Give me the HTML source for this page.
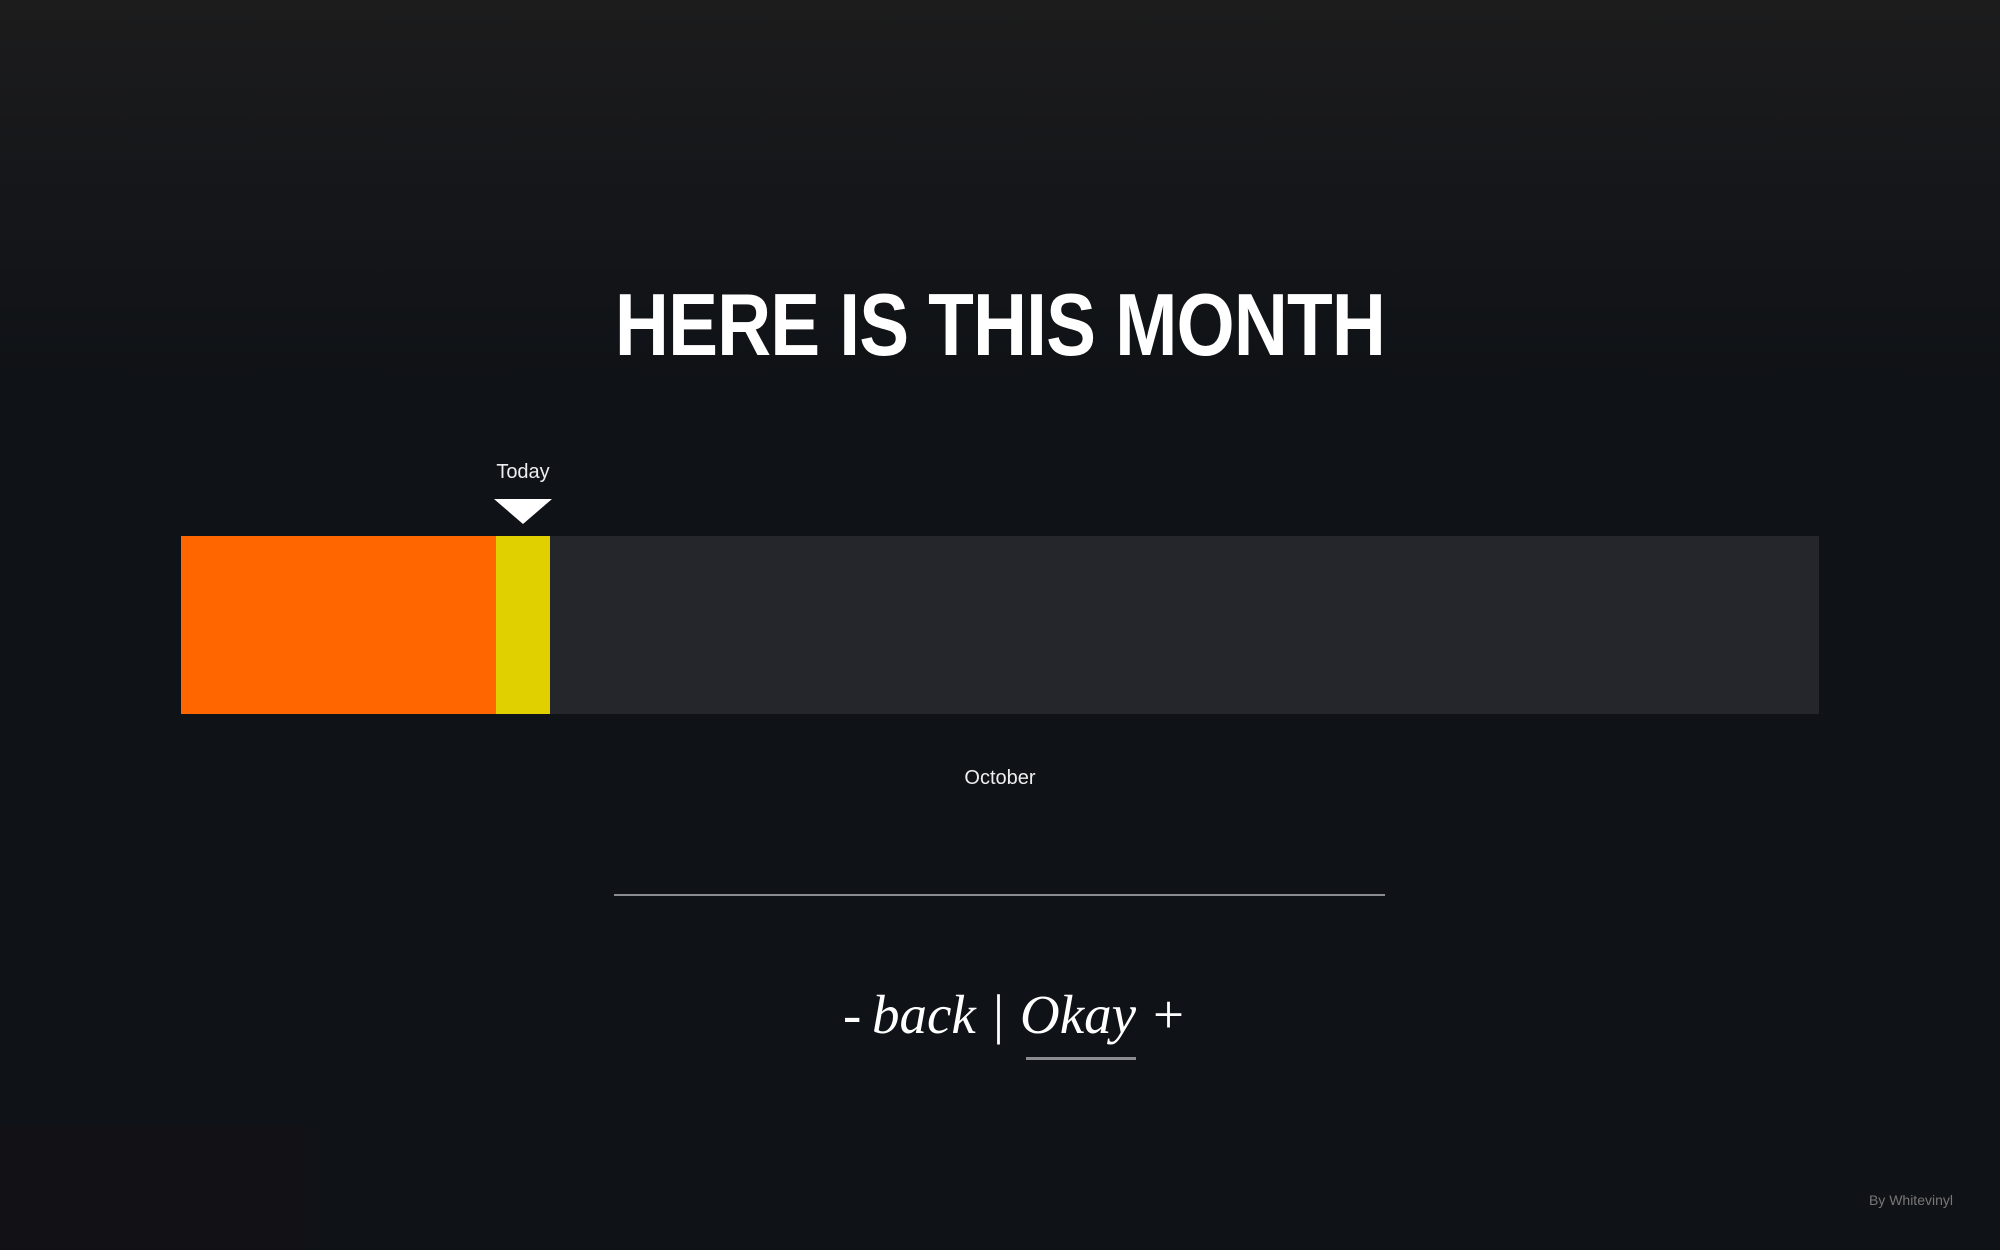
<!DOCTYPE html>
<html><head><meta charset="utf-8"><style>
html,body{margin:0;padding:0;}
body{width:2000px;height:1250px;position:relative;overflow:hidden;background:#0f1216;font-family:"Liberation Sans",sans-serif;color:#fff;}
.top{position:absolute;left:0;top:0;width:2000px;height:380px;background:linear-gradient(#1c1c1d 0%,#16171a 45%,#0f1216 100%);}
.bl{position:absolute;left:0;top:1125px;width:305px;height:125px;background:#121116;}
.title{position:absolute;left:0;width:2000px;top:272px;text-align:center;font-weight:bold;font-size:88px;line-height:106px;letter-spacing:-1px;transform:scaleX(0.85);transform-origin:1000px 0;}
.today{position:absolute;left:463px;width:120px;top:461px;text-align:center;font-size:20px;color:#eee;}
.tri{position:absolute;left:494px;top:499px;width:0;height:0;border-left:29px solid transparent;border-right:29px solid transparent;border-top:25px solid #fff;}
.bar{position:absolute;left:181px;top:536px;width:1638px;height:178px;background:#24262b;}
.o{position:absolute;left:181px;top:536px;width:315px;height:178px;background:#ff6600;}
.y{position:absolute;left:496px;top:536px;width:54px;height:178px;background:#e0d000;}
.oct{position:absolute;left:0;width:2000px;top:767px;text-align:center;font-size:20px;color:#eee;}
.line{position:absolute;left:614px;top:894px;width:771px;height:2px;background:#8a8c90;}
.n{position:absolute;top:980px;white-space:nowrap;font-family:"Liberation Serif",serif;font-style:italic;font-size:55px;line-height:70px;color:#fff;}
.nn{font-style:normal;}
.ul{position:absolute;left:1026px;top:1057px;width:110px;height:3px;background:#8a8c90;}
.by{position:absolute;right:47px;top:1192px;font-size:14px;color:#777;}
</style></head><body>
<div class="top"></div><div class="bl"></div>
<div class="title">HERE IS THIS MONTH</div>
<div class="today">Today</div><div class="tri"></div>
<div class="bar"></div><div class="o"></div><div class="y"></div>
<div class="oct">October</div>
<div class="line"></div>
<div class="n nn" style="left:843px">-</div>
<div class="n" style="left:872px">back</div>
<div class="n nn" style="left:993px">|</div>
<div class="n" style="left:1020px">Okay</div>
<div class="n nn" style="left:1153px">+</div>
<div class="ul"></div>
<div class="by">By Whitevinyl</div>
</body></html>
